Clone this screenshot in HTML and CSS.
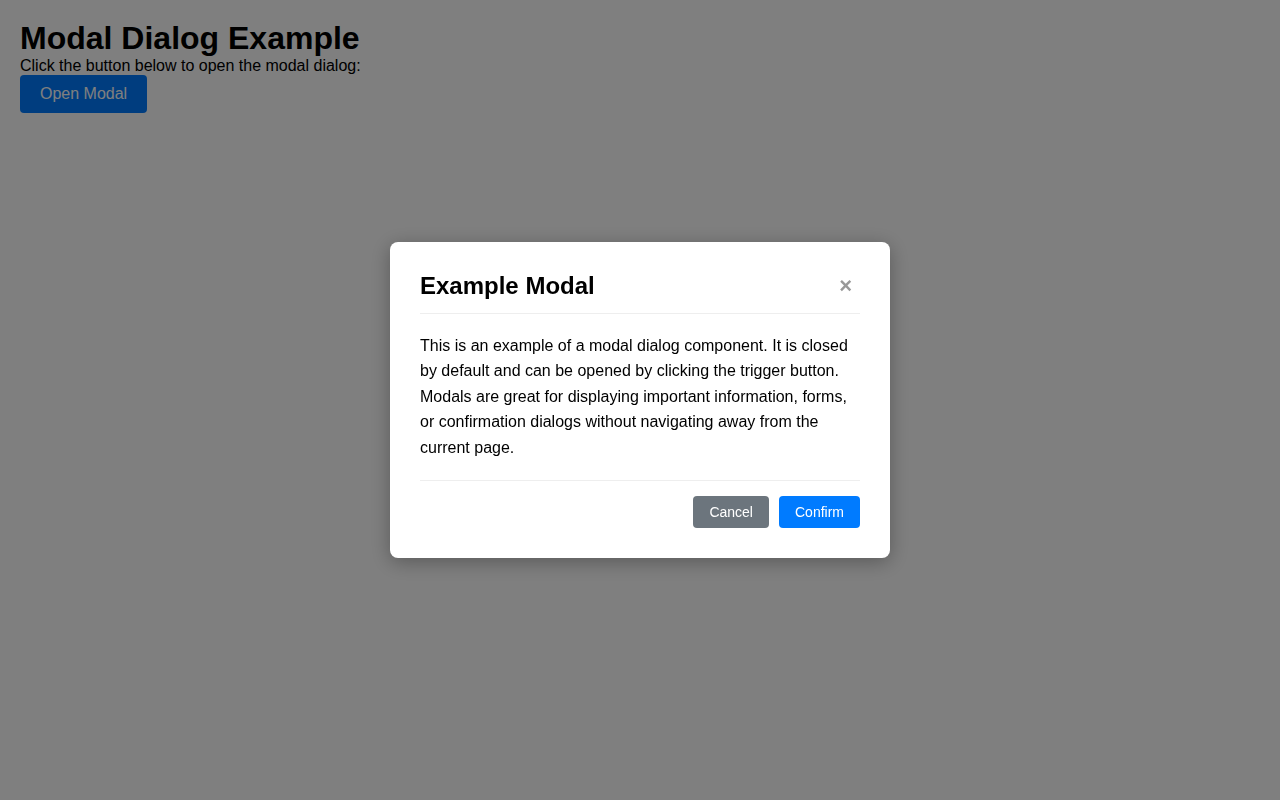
FILE: index.html
```html
<!DOCTYPE html>
<html>
<head>
    <link rel="stylesheet" href="styles.css">
</head>
<body>
    <h1>Modal Dialog Example</h1>
    <p>Click the button below to open the modal dialog:</p>
    <button type="button" class="open-btn">Open Modal</button>

    <div class="overlay">
        <div class="modal">
            <div class="modal-header">
                <h2>Example Modal</h2>
                <button type="button" class="close-btn">&times;</button>
            </div>
            <div class="modal-body">
                This is an example of a modal dialog component. It is closed by default and can be opened by clicking the trigger button. Modals are great for displaying important information, forms, or confirmation dialogs without navigating away from the current page.
            </div>
            <div class="modal-footer">
                <button type="button" class="btn btn-cancel">Cancel</button>
                <button type="button" class="btn btn-confirm">Confirm</button>
            </div>
        </div>
    </div>
</body>
</html>
```

FILE: styles.css
```css
body {
    margin: 0;
    padding: 20px;
    font-family: "Liberation Sans", Arial, sans-serif;
    background-color: white;
    color: black;
}

h1 {
    margin: 0;
    font-size: 32px;
}

p {
    margin: 0;
    font-size: 16px;
}

.open-btn {
    padding: 10px 20px;
    font-family: inherit;
    font-size: 16px;
    color: white;
    background-color: #007bff;
    border: none;
    border-radius: 4px;
}

.overlay {
    position: fixed;
    top: 0;
    left: 0;
    right: 0;
    bottom: 0;
    background-color: rgba(0, 0, 0, 0.5);
    display: flex;
    align-items: center;
    justify-content: center;
}

.modal {
    width: 440px;
    padding: 30px;
    background-color: white;
    border-radius: 8px;
    box-shadow: 0 4px 20px rgba(0, 0, 0, 0.3);
}

.modal-header {
    display: flex;
    justify-content: space-between;
    align-items: center;
    padding-bottom: 13px;
    border-bottom: 1px solid #eee;
}

.modal-header h2 {
    margin: 0;
    font-size: 24px;
}

.close-btn {
    padding: 0 8px;
    font-family: inherit;
    font-size: 22px;
    font-weight: bold;
    line-height: 1;
    color: #999;
    background: none;
    border: none;
}

.modal-body {
    padding: 19px 0 20px;
    font-size: 16px;
    line-height: 1.6;
}

.modal-footer {
    display: flex;
    justify-content: flex-end;
    gap: 10px;
    padding-top: 15px;
    border-top: 1px solid #eee;
}

.btn {
    padding: 8px 16px;
    font-family: inherit;
    font-size: 14px;
    color: white;
    border: none;
    border-radius: 4px;
}

.btn-cancel {
    background-color: #6c757d;
}

.btn-confirm {
    background-color: #007bff;
}
```
